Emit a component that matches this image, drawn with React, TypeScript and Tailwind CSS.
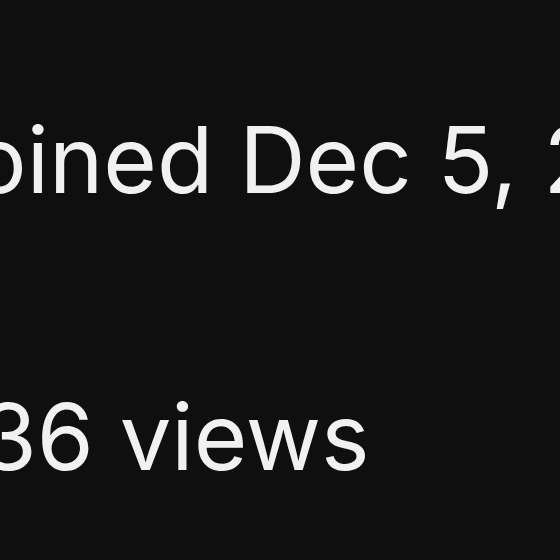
export default function App() {
  return (
    <div className="w-[560px] h-[560px] overflow-hidden bg-[#0f0f0f] text-[#f1f1f1]">
      <div
        className="flex flex-col gap-[185px] pt-[114px] text-[92px] leading-none whitespace-nowrap"
        style={{ fontFamily: 'Inter, "Noto Sans", sans-serif' }}
      >
        <div className="ml-[-81px]">Joined Dec 5, 2013</div>
        <div className="ml-[-77px]">836 views</div>
      </div>
    </div>
  )
}
